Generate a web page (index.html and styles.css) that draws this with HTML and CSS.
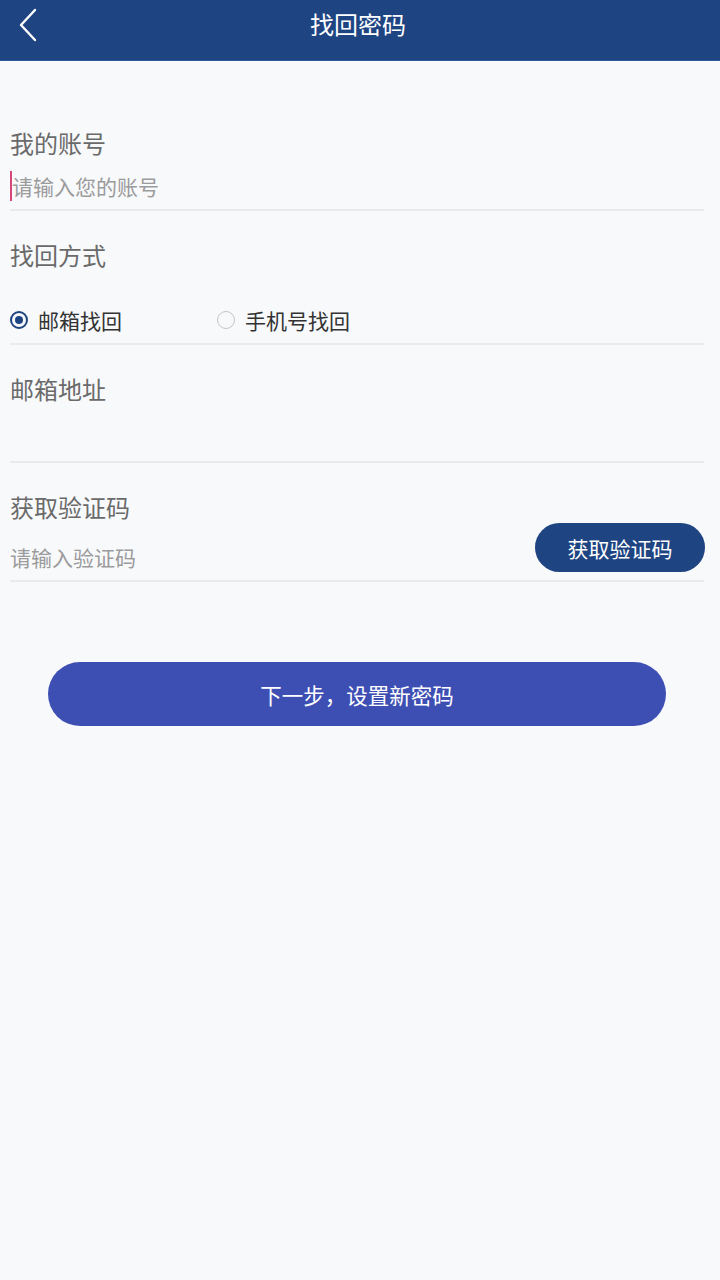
FILE: index.html
```html
<!DOCTYPE html>
<html lang="zh-CN">
<head>
  <meta charset="utf-8">
  <title>找回密码</title>
  <link rel="stylesheet" href="styles.css">
</head>
<body>

  <!-- Top bar -->
  <header class="topbar">
    <span class="back">
      <svg width="20" height="34" viewBox="0 0 20 34"><path d="M17 2 L3 17 L17 32" fill="none" stroke="#fff" stroke-width="2.4" stroke-linecap="round" stroke-linejoin="round"/></svg>
    </span>
    <h1>找回密码</h1>
  </header>

  <div class="form">
    <div class="field first">
      <label>我的账号</label>
      <div class="input-line"><span class="cursor"></span><span class="placeholder">请输入您的账号</span></div>
    </div>

    <div class="field">
      <label>找回方式</label>
      <div class="radios">
        <span class="radio checked"><i></i>邮箱找回</span>
        <span class="radio"><i></i>手机号找回</span>
      </div>
    </div>

    <div class="field">
      <label>邮箱地址</label>
      <div class="input-empty"></div>
    </div>

    <div class="field last">
      <label>获取验证码</label>
      <div class="code-row">
        <span class="placeholder">请输入验证码</span>
        <button class="code-btn">获取验证码</button>
      </div>
    </div>
  </div>

  <div class="next-wrap">
    <button class="next-btn">下一步，设置新密码</button>
  </div>

</body>
</html>
```

FILE: styles.css
```css
* {
  box-sizing: border-box;
  margin: 0;
  padding: 0;
}

body {
  font-family: "Noto Sans CJK SC", "Noto Sans", sans-serif;
  background: #f8f9fb;
  width: 720px;
  height: 1280px;
  color: #666;
}

.topbar {
  height: 61px;
  background: #1e4482;
  display: flex;
  align-items: center;
  justify-content: center;
  position: relative;
  border-bottom: 1px solid #2f5a9c;
}

.topbar h1 {
  color: #fff;
  font-size: 24px;
  font-weight: normal;
  line-height: 30px;
  margin-top: -12px;
  margin-left: -4px;
}

.back {
  position: absolute;
  left: 18px;
  top: 8px;
  display: flex;
}

.form {
  padding: 0 16px 0 10px;
}

.field {
  padding-top: 29px;
  border-bottom: 2px solid #e9eaec;
}

.field.first {
  padding-top: 67px;
  padding-bottom: 8px;
}

.field label {
  display: block;
  font-size: 24px;
  line-height: 30px;
  color: #6a6a6a;
}

.input-line {
  margin-top: 13px;
  display: flex;
  align-items: center;
  height: 30px;
}

.cursor {
  width: 2px;
  height: 30px;
  background: #d9467a;
}

.placeholder {
  font-size: 21px;
  line-height: 30px;
  color: #9b9b9b;
}

.radios {
  margin-top: 35px;
  padding-bottom: 8px;
  display: flex;
  height: 38px;
  align-items: center;
}

.radio {
  display: flex;
  align-items: center;
  font-size: 21px;
  line-height: 30px;
  color: #333;
  width: 207px;
}

.radio i {
  width: 18px;
  height: 18px;
  border-radius: 50%;
  border: 1.5px solid #c4c4c4;
  margin-right: 10px;
  display: flex;
  align-items: center;
  justify-content: center;
}

.radio.checked i {
  border: 2px solid #1e4482;
}

.radio.checked i::after {
  content: "";
  width: 8px;
  height: 8px;
  border-radius: 50%;
  background: #1e4482;
}

.input-empty {
  height: 57px;
}

.code-row {
  display: flex;
  justify-content: space-between;
  align-items: center;
  height: 51px;
  margin-bottom: 7px;
}

.code-row .placeholder {
  align-self: flex-end;
  margin-bottom: 1px;
}

.code-btn {
  width: 170px;
  height: 49px;
  border: none;
  border-radius: 25px;
  background: #1e4482;
  color: #fff;
  font-family: inherit;
  font-size: 21px;
  margin-right: -1px;
}

.next-wrap {
  padding: 80px 54px 0 48px;
}

.next-btn {
  width: 100%;
  height: 64px;
  border: none;
  border-radius: 32px;
  background: #3e4fb4;
  color: #fff;
  font-family: inherit;
  font-size: 21.5px;
}
```
